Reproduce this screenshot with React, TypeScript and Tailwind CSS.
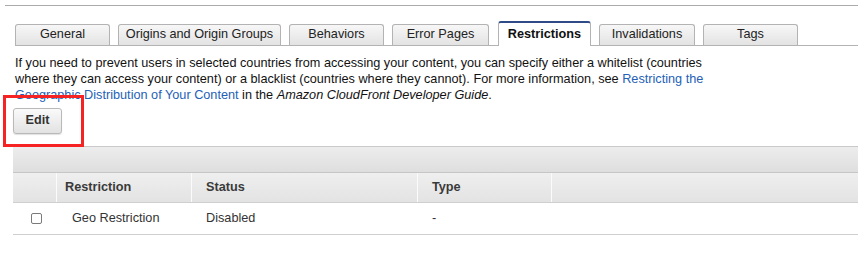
const TABS = [
  { label: 'General', w: 'w-[95px]' },
  { label: 'Origins and Origin Groups', w: 'w-[163px]' },
  { label: 'Behaviors', w: 'w-[95px]' },
  { label: 'Error Pages', w: 'w-[97px]' },
  { label: 'Restrictions', w: 'w-[93px]', active: true },
  { label: 'Invalidations', w: 'w-[96px]' },
  { label: 'Tags', w: 'w-[95px]' },
]

export default function App() {
  return (
    <div className="relative w-[858px] h-[271px] bg-white text-[12.7px] text-[#222] font-['Liberation_Sans',Arial,sans-serif] overflow-hidden pt-[5px]">
      {/* top rule */}
      <div className="ml-[5px] h-px bg-[#ababab]" />

      {/* tabs */}
      <div className="mt-[16px] ml-[15px] h-[24px] flex items-end gap-[8px] border-b border-[#b3b3b3]">
        {TABS.map(t =>
          t.active ? (
            <div
              key={t.label}
              className={`${t.w} h-[25px] -mb-px flex items-center justify-center bg-white border-x border-[#b3b3b3] border-t-2 border-t-[#2f4a86] rounded-t-[3px] font-bold text-[#111] ml-[1px]`}
            >
              {t.label}
            </div>
          ) : (
            <div
              key={t.label}
              className={`${t.w} h-[21px] flex items-center justify-center bg-gradient-to-b from-[#f7f7f7] to-[#e3e3e3] border-x border-t border-[#b3b3b3] rounded-t-[3px] text-[#222]`}
            >
              {t.label}
            </div>
          )
        )}
      </div>

      {/* description */}
      <p className="mt-[9px] px-[15px] leading-[16px] text-[#111]">
        If you need to prevent users in selected countries from accessing your content, you can specify either a whitelist (countries
        <br />
        where they can access your content) or a blacklist (countries where they cannot). For more information, see{' '}
        <a className="text-[#2461b6]">Restricting the</a>
        <br />
        <a className="text-[#2461b6]">Geographic Distribution of Your Content</a> in the{' '}
        <i>Amazon CloudFront Developer Guide</i>.
      </p>

      {/* edit */}
      <button className="mt-[5px] ml-[13px] w-[49px] h-[26px] flex items-center justify-center rounded-[3px] border border-[#b9b9b9] bg-gradient-to-b from-[#fafafa] to-[#e2e2e2] font-bold text-[#333] shadow-[0_1px_1px_rgba(0,0,0,0.12)]">
        Edit
      </button>

      {/* highlight box */}
      <div className="absolute left-[3px] top-[95px] w-[81px] h-[52px] border-[3px] border-[#f52323]" />

      {/* table */}
      <div className="mt-[12px] ml-[13px]">
        <div className="h-[26px] border-t border-[#c9c9c9] bg-gradient-to-b from-[#ededed] to-[#dedede]" />
        <div className="h-[30px] grid grid-cols-[44px_135px_226px_134px_1fr] border-t border-[#c6c6c6] bg-gradient-to-b from-[#efefef] to-[#e3e3e3] font-bold text-[#3a3a3a]">
          <div className="border-r border-[#fbfbfb]" />
          <div className="flex items-center pl-[8px] border-r border-[#fbfbfb]">Restriction</div>
          <div className="flex items-center pl-[14px] border-r border-[#fbfbfb]">Status</div>
          <div className="flex items-center pl-[14px] border-r border-[#fbfbfb]">Type</div>
          <div />
        </div>
        <div className="h-[33px] grid grid-cols-[44px_135px_226px_134px_1fr] border-y border-[#cfcfcf] text-[#333]">
          <div className="flex items-center pl-[18px]">
            <span className="w-[11px] h-[11px] rounded-[2px] border border-[#7a7a7a] bg-white" />
          </div>
          <div className="flex items-center pl-[15px]">Geo Restriction</div>
          <div className="flex items-center pl-[14px]">Disabled</div>
          <div className="flex items-center pl-[14px]">-</div>
          <div />
        </div>
      </div>
    </div>
  )
}
